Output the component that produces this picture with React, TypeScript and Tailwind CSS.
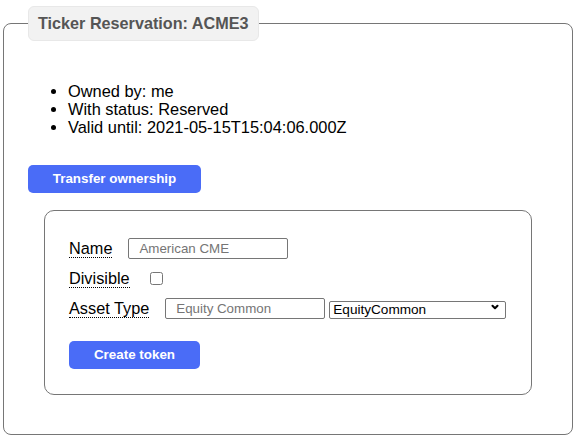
import { ChevronDown } from 'lucide-react';

function FieldLabel({ children }: { children: string }): JSX.Element {
  return (
    <span className="mr-4 border-b border-dotted border-black text-[16.3px] leading-[18px] text-black">{children}</span>
  );
}

export default function App(): JSX.Element {
  return (
    <div className="min-h-[440px] bg-white pl-[3px] pr-[3px] pt-[6px] font-['Liberation_Sans',Arial,sans-serif] text-black">
      <fieldset className="h-[429px] w-[570px] rounded-lg border border-[#767676] px-6 pb-10">
        <legend className="rounded-md border border-[#e8e8e8] bg-[#f2f2f2] px-[9px] py-[8px] text-[16.2px] font-bold leading-[17px] text-[#555]">
          Ticker Reservation: ACME3
        </legend>

        <ul className="mt-[41px] list-disc pl-10 text-[16.4px] leading-[18px]">
          <li>Owned by: me</li>
          <li>With status: Reserved</li>
          <li>Valid until: 2021-05-15T15:04:06.000Z</li>
        </ul>

        <button className="mt-[29px] h-[28px] w-[173px] rounded-[5px] bg-[#4a6cf7] text-[13.4px] font-bold text-white">
          Transfer ownership
        </button>

        <div className="mx-4 mt-[17px] h-[185px] rounded-[10px] border border-[#767676] px-6 pt-[27px]">
          <div className="flex h-[21px] items-center">
            <FieldLabel>Name</FieldLabel>
            <input
              className="h-[21px] w-[160px] rounded-[2px] border border-[#767676] px-[10px] text-[13.33px] placeholder:text-[#757575]"
              placeholder="American CME"
            />
          </div>
          <div className="mt-[9px] flex h-[21px] items-center">
            <FieldLabel>Divisible</FieldLabel>
            <input type="checkbox" className="ml-1 h-[13px] w-[13px]" />
          </div>
          <div className="mt-[9px] flex h-[21px] items-center">
            <FieldLabel>Asset Type</FieldLabel>
            <input
              className="h-[21px] w-[160px] rounded-[2px] border border-[#767676] px-[10px] text-[13.33px] placeholder:text-[#757575]"
              placeholder="Equity Common"
            />
            <div className="relative ml-1">
              <select className="h-[18px] w-[177px] appearance-none rounded-[2px] border border-[#767676] bg-white pl-[3px] text-[13.6px] leading-[16px] text-black">
                <option>EquityCommon</option>
              </select>
              <ChevronDown className="pointer-events-none absolute right-[6px] top-[5px] h-[10px] w-[10px]" strokeWidth={5} />
            </div>
          </div>

          <button className="mt-[22px] h-[28px] w-[131px] rounded-[5px] bg-[#4a6cf7] text-[13.4px] font-bold text-white">
            Create token
          </button>
        </div>
      </fieldset>
    </div>
  );
}
